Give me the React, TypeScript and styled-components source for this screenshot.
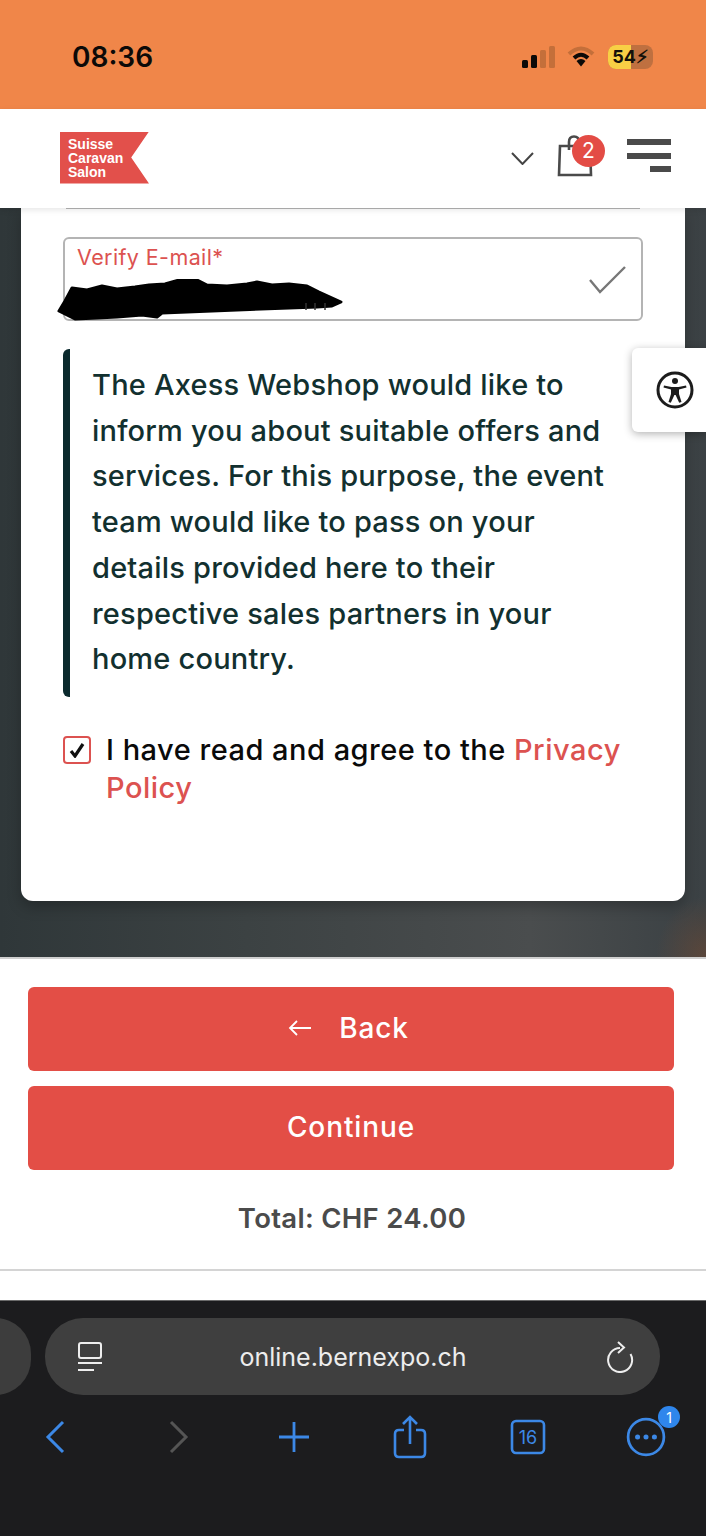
import React from 'react'
import styled, { createGlobalStyle } from 'styled-components'

const Global = createGlobalStyle`
  html, body {
    margin: 0;
    padding: 0;
    background: #fff;
  }
  * {
    box-sizing: border-box;
  }
`

const Page = styled.div`
  position: relative;
  width: 706px;
  height: 1536px;
  overflow: hidden;
  display: flex;
  flex-direction: column;
  font-family: Inter, "Liberation Sans", sans-serif;
`

/* status bar */
const StatusBar = styled.div`
  height: 109px;
  flex: none;
  background: #f08649;
  display: flex;
  align-items: center;
  justify-content: space-between;
  padding: 4px 53px 0 72px;
`

const Clock = styled.span`
  font-size: 28px;
  font-weight: 600;
  color: #0c0a08;
`

const StatusIcons = styled.div`
  display: flex;
  align-items: center;
  gap: 11px;
`

const Battery = styled.div`
  position: relative;
  width: 45px;
  height: 24px;
  margin-left: 2px;
  border-radius: 8px;
  overflow: hidden;
  background: #bf7040;
  font-size: 18px;
  font-weight: 700;
  color: #14100a;
  display: flex;
  align-items: center;
  justify-content: center;
  z-index: 0;

  &::before {
    content: '';
    position: absolute;
    inset: 0 50% 0 0;
    background: #f8cf45;
    z-index: -1;
  }
`

/* site header */
const Header = styled.header`
  height: 99px;
  flex: none;
  background: #fff;
  display: flex;
  align-items: center;
  padding: 0 35px 0 60px;
  position: relative;
  z-index: 2;
  box-shadow: 0 2px 6px rgba(0, 0, 0, 0.1);
`

const Logo = styled.div`
  width: 89px;
  height: 52px;
  margin-top: -2px;
  background: #e2504b;
  clip-path: polygon(0 0, 100% 0, 80% 50%, 100% 100%, 0 100%);
  color: #fff;
  font-family: "Liberation Sans", sans-serif;
  font-size: 14px;
  font-weight: 700;
  line-height: 14px;
  padding: 5px 0 0 8px;
`

const HeaderActions = styled.div`
  margin-left: auto;
  display: flex;
  align-items: center;
`

const BagWrap = styled.div`
  position: relative;
  width: 36px;
  height: 42px;
  margin: -6px 34px 0 23px;
`

const BagBadge = styled.span`
  position: absolute;
  left: 15px;
  top: 0;
  width: 33px;
  height: 32px;
  border-radius: 50%;
  background: #e34c45;
  color: #fff;
  font-size: 21px;
  font-weight: 400;
  display: flex;
  align-items: center;
  justify-content: center;
`

const Burger = styled.div`
  width: 44px;
  margin-top: -6px;
  display: flex;
  flex-direction: column;
  align-items: flex-end;
  gap: 7.5px;
`

const BurgerBar = styled.span<{ $short?: boolean }>`
  display: block;
  height: 6px;
  width: ${p => (p.$short ? '21px' : '44px')};
  background: #4a4a4a;
`

/* main area */
const Main = styled.main`
  flex: none;
  height: 749px;
  padding: 0 21px 56px;
  background:
    radial-gradient(ellipse 50px 60px at 706px 749px, rgba(150, 80, 40, 0.35), transparent),
    linear-gradient(90deg, #2f3739 0%, #3c4243 35%, #4a4d4e 75%, #3b4144 100%);
`

const Card = styled.section`
  height: 100%;
  background: #fff;
  border-radius: 0 0 12px 12px;
  box-shadow: 0 6px 14px rgba(0, 0, 0, 0.25);
  padding: 0 42px;
  display: flex;
  flex-direction: column;
`

const PrevFieldEdge = styled.div`
  height: 1px;
  margin: 0 3px;
  background: #b5b5b5;
  flex: none;
`

const Field = styled.div`
  position: relative;
  height: 84px;
  margin-top: 28px;
  border: 2px solid #b4b4b4;
  border-radius: 6px;
  padding: 5px 12px;
  flex: none;
`

const FieldLabel = styled.label`
  color: #dc5250;
  font-size: 21.5px;
  font-weight: 400;
  letter-spacing: 0.4px;
`

const Scribble = styled.svg`
  position: absolute;
  left: -8px;
  top: 40px;
`

const FieldCheck = styled.svg`
  position: absolute;
  right: 14px;
  top: 27px;
`

const Notice = styled.blockquote`
  margin: 28px 0 0;
  padding: 13px 20px 15px 22px;
  border-left: 7px solid #0b2a2e;
  border-radius: 6px 0 0 6px;
  color: #12302f;
  font-size: 29px;
  font-weight: 500;
  letter-spacing: 0.2px;
  line-height: 45.7px;
  flex: none;
`

const Consent = styled.div`
  margin-top: 34px;
  display: flex;
  gap: 15px;
  color: #0a0a0a;
  font-size: 29px;
  font-weight: 500;
  letter-spacing: 0.5px;
  line-height: 38.5px;
`

const CheckBox = styled.span`
  flex: none;
  width: 28px;
  height: 28px;
  margin-top: 5px;
  border: 2px solid #dc5250;
  border-radius: 4px;
  display: flex;
  align-items: center;
  justify-content: center;
`

const PolicyLink = styled.a`
  color: #dc5250;
`

/* floating accessibility tab */
const AccessTab = styled.button`
  position: absolute;
  left: 632px;
  top: 348px;
  width: 74px;
  height: 84px;
  background: #fff;
  border: none;
  border-radius: 6px 0 0 6px;
  box-shadow: 0 2px 8px rgba(0, 0, 0, 0.3);
  padding: 0 0 0 11px;
  display: flex;
  align-items: center;
  justify-content: center;
  z-index: 3;
`

/* checkout footer */
const Checkout = styled.div`
  height: 343px;
  flex: none;
  background: #fff;
  border-top: 2px solid #cfcfcf;
  padding: 28px 32px 0 28px;
  display: flex;
  flex-direction: column;
`

const CheckoutButton = styled.button<{ $withIcon?: boolean }>`
  height: 84px;
  flex: none;
  border: none;
  border-radius: 6px;
  background: #e34e46;
  color: #fff;
  font-family: inherit;
  font-size: 28px;
  font-weight: 500;
  letter-spacing: 0.9px;
  padding: 0 ${p => (p.$withIcon ? '5px' : '0')} 2px 0;
  display: flex;
  align-items: center;
  justify-content: center;
  gap: 27px;
  & + & {
    margin-top: 15px;
  }
`

const Total = styled.div`
  margin-top: 30px;
  text-align: center;
  color: #4b4b4b;
  font-size: 27.5px;
  font-weight: 600;
  letter-spacing: 0.3px;
  line-height: 36px;
  padding-left: 2px;
`

const CheckoutRule = styled.div`
  height: 2px;
  margin: 33px -32px 0 -28px;
  background: #d4d4d4;
`

/* safari chrome */
const Safari = styled.div`
  flex: none;
  height: 236px;
  background: #1c1c1e;
  border-top: 1px solid #6a6a6a;
  padding-top: 17px;
  position: relative;
`

const TabStub = styled.div`
  position: absolute;
  left: -40px;
  top: 17px;
  width: 71px;
  height: 77px;
  border-radius: 38px;
  background: #3d3d3d;
`

const UrlPill = styled.div`
  height: 77px;
  margin: 0 46px 0 45px;
  border-radius: 38px;
  background: #3f3f3f;
  display: flex;
  align-items: center;
  justify-content: space-between;
  padding: 0 26px 0 32px;
`

const UrlText = styled.span`
  color: #ededed;
  font-size: 25px;
  font-weight: 400;
  margin-right: 3px;
`

const Toolbar = styled.nav`
  margin: 20px 0 0 -3px;
  display: grid;
  grid-template-columns: repeat(6, 118px);
  justify-items: center;
  align-items: center;
`

const ToolSlot = styled.span`
  position: relative;
  display: flex;
`

const ToolBadge = styled.span`
  position: absolute;
  right: -14px;
  top: -11px;
  width: 22px;
  height: 22px;
  border-radius: 50%;
  background: #2f86ec;
  color: #fff;
  font-size: 14px;
  display: flex;
  align-items: center;
  justify-content: center;
`

const Blue = '#3c88e6'

export default function App() {
  return (
    <Page>
      <Global />
      <StatusBar>
        <Clock>08:36</Clock>
        <StatusIcons>
          <svg width="34" height="22" viewBox="0 0 34 22">
            <rect x="0" y="14" width="6" height="8" rx="1.5" fill="#0c0a08" />
            <rect x="9" y="9" width="6" height="13" rx="1.5" fill="#0c0a08" />
            <rect x="18" y="4" width="6" height="18" rx="1.5" fill="#c46f3a" />
            <rect x="27" y="0" width="6" height="22" rx="1.5" fill="#c46f3a" />
          </svg>
          <svg width="28" height="22" viewBox="0 0 28 22">
            <path d="M2 8 Q14 -3 26 8" fill="none" stroke="#c46f3a" strokeWidth="4" />
            <path d="M7 12 Q14 5.5 21 12" fill="none" stroke="#0c0a08" strokeWidth="4" />
            <path d="M9.5 15 Q14 11 18.5 15 L14 20.5 Z" fill="#0c0a08" />
          </svg>
          <Battery>54⚡︎</Battery>
        </StatusIcons>
      </StatusBar>

      <Header>
        <Logo>
          Suisse
          <br />
          Caravan
          <br />
          Salon
        </Logo>
        <HeaderActions>
          <svg width="23" height="13" viewBox="0 0 23 13">
            <path d="M1 1 L11.5 12 L22 1" fill="none" stroke="#444" strokeWidth="2" />
          </svg>
          <BagWrap>
            <svg width="36" height="42" viewBox="0 0 36 42">
              <path
                d="M3 11 H33 L34 40 H2 Z M12 15 V7 Q12 1.5 17 1.5 Q22 1.5 22 7"
                fill="none"
                stroke="#4a4a4a"
                strokeWidth="2.6"
              />
            </svg>
            <BagBadge>2</BagBadge>
          </BagWrap>
          <Burger>
            <BurgerBar />
            <BurgerBar />
            <BurgerBar $short />
          </Burger>
        </HeaderActions>
      </Header>

      <Main>
        <Card>
          <PrevFieldEdge />
          <Field>
            <FieldLabel>Verify E-mail*</FieldLabel>
            <Scribble width="290" height="44" viewBox="0 0 290 44">
              <path
                d="M2 32 L8 22 L15 9 L30 11 L45 7 L60 10 L78 8 L92 6 L108 5 L122 1 L140 1 L150 6 L170 7 L190 5 L200 3 L215 6 L232 5 L250 7 L262 13 L284 23 L275 27 L260 28 L232 29 L180 31 L130 33 L105 34 L100 38 L85 36 L60 38 L40 39 L18 40 L10 36 Z"
                fill="#000"
                stroke="#000"
                strokeWidth="3"
                strokeLinejoin="round"
              />
              <path d="M249 24 V31 M258 24 V31 M268 24 V31" stroke="#333" strokeWidth="1.5" />
            </Scribble>
            <FieldCheck width="38" height="28" viewBox="0 0 38 28">
              <path d="M1 14 L11 26 L36 1" fill="none" stroke="#777" strokeWidth="2.4" />
            </FieldCheck>
          </Field>

          <Notice>
            The Axess Webshop would like to inform you about suitable offers and services. For this
            purpose, the event team would like to pass on your details provided here to their
            respective sales partners in your home country.
          </Notice>

          <Consent>
            <CheckBox>
              <svg width="16" height="16" viewBox="0 0 16 16">
                <path d="M2 9 L6 14 L14 2" fill="none" stroke="#111" strokeWidth="3.2" />
              </svg>
            </CheckBox>
            <span>
              I have read and agree to the <PolicyLink>Privacy Policy</PolicyLink>
            </span>
          </Consent>
        </Card>
      </Main>

      <AccessTab aria-label="Accessibility">
        <svg width="38" height="38" viewBox="0 0 38 38">
          <circle cx="19" cy="19" r="17" fill="none" stroke="#1c1c1c" strokeWidth="3" />
          <circle cx="19" cy="10" r="3" fill="#1c1c1c" />
          <path
            d="M8 14.5 L15.5 16 H22.5 L30 14.5 L30.5 16.5 L23 18.5 V23 L25.5 31 L23.2 31.8 L19.6 24 H18.4 L14.8 31.8 L12.5 31 L15 23 V18.5 L7.5 16.5 Z"
            fill="#1c1c1c"
          />
        </svg>
      </AccessTab>

      <Checkout>
        <CheckoutButton $withIcon>
          <svg width="24" height="16" viewBox="0 0 24 16">
            <path d="M23 8 H2 M9 1 L2 8 L9 15" fill="none" stroke="#fff" strokeWidth="1.8" />
          </svg>
          Back
        </CheckoutButton>
        <CheckoutButton>Continue</CheckoutButton>
        <Total>Total: CHF 24.00</Total>
        <CheckoutRule />
      </Checkout>

      <Safari>
        <TabStub />
        <UrlPill>
          <svg width="26" height="30" viewBox="0 0 26 30">
            <rect x="2" y="1" width="22" height="15" rx="2" fill="none" stroke="#eee" strokeWidth="2" />
            <path d="M1 21 H25 M1 28 H17" stroke="#eee" strokeWidth="2" />
          </svg>
          <UrlText>online.bernexpo.ch</UrlText>
          <svg width="28" height="32" viewBox="0 0 28 32">
            <path d="M24.5 13 A12 12 0 1 1 14 7" fill="none" stroke="#eee" strokeWidth="2" />
            <path d="M12 1 L18 6.5 L12 12" fill="none" stroke="#eee" strokeWidth="2" />
          </svg>
        </UrlPill>
        <Toolbar>
          <svg width="22" height="34" viewBox="0 0 22 34">
            <path d="M18 2 L3 17 L18 32" fill="none" stroke={Blue} strokeWidth="3" />
          </svg>
          <svg width="30" height="34" viewBox="-11 0 30 34">
            <path d="M1 2 L16 17 L1 32" fill="none" stroke="#555" strokeWidth="3" />
          </svg>
          <svg width="36" height="32" viewBox="-4 0 36 32">
            <path d="M16 1 V31 M1 16 H31" stroke={Blue} strokeWidth="2.8" />
          </svg>
          <svg width="34" height="44" viewBox="0 0 34 44">
            <path
              d="M11 15 H6 Q2 15 2 19 V38 Q2 42 6 42 H28 Q32 42 32 38 V19 Q32 15 28 15 H23 M17 29 V2 M10 9 L17 2 L24 9"
              fill="none"
              stroke={Blue}
              strokeWidth="2.6"
            />
          </svg>
          <svg width="36" height="36" viewBox="0 0 36 36">
            <rect x="2" y="2" width="32" height="32" rx="4" fill="none" stroke={Blue} strokeWidth="2.6" />
            <text x="18" y="24.5" textAnchor="middle" fontSize="18" fontFamily="Inter" fill={Blue}>
              16
            </text>
          </svg>
          <ToolSlot>
            <svg width="40" height="40" viewBox="0 0 38 38">
              <circle cx="19" cy="19" r="17" fill="none" stroke={Blue} strokeWidth="2.6" />
              <circle cx="11" cy="19" r="2.4" fill={Blue} />
              <circle cx="19" cy="19" r="2.4" fill={Blue} />
              <circle cx="27" cy="19" r="2.4" fill={Blue} />
            </svg>
            <ToolBadge>1</ToolBadge>
          </ToolSlot>
        </Toolbar>
      </Safari>
    </Page>
  )
}
